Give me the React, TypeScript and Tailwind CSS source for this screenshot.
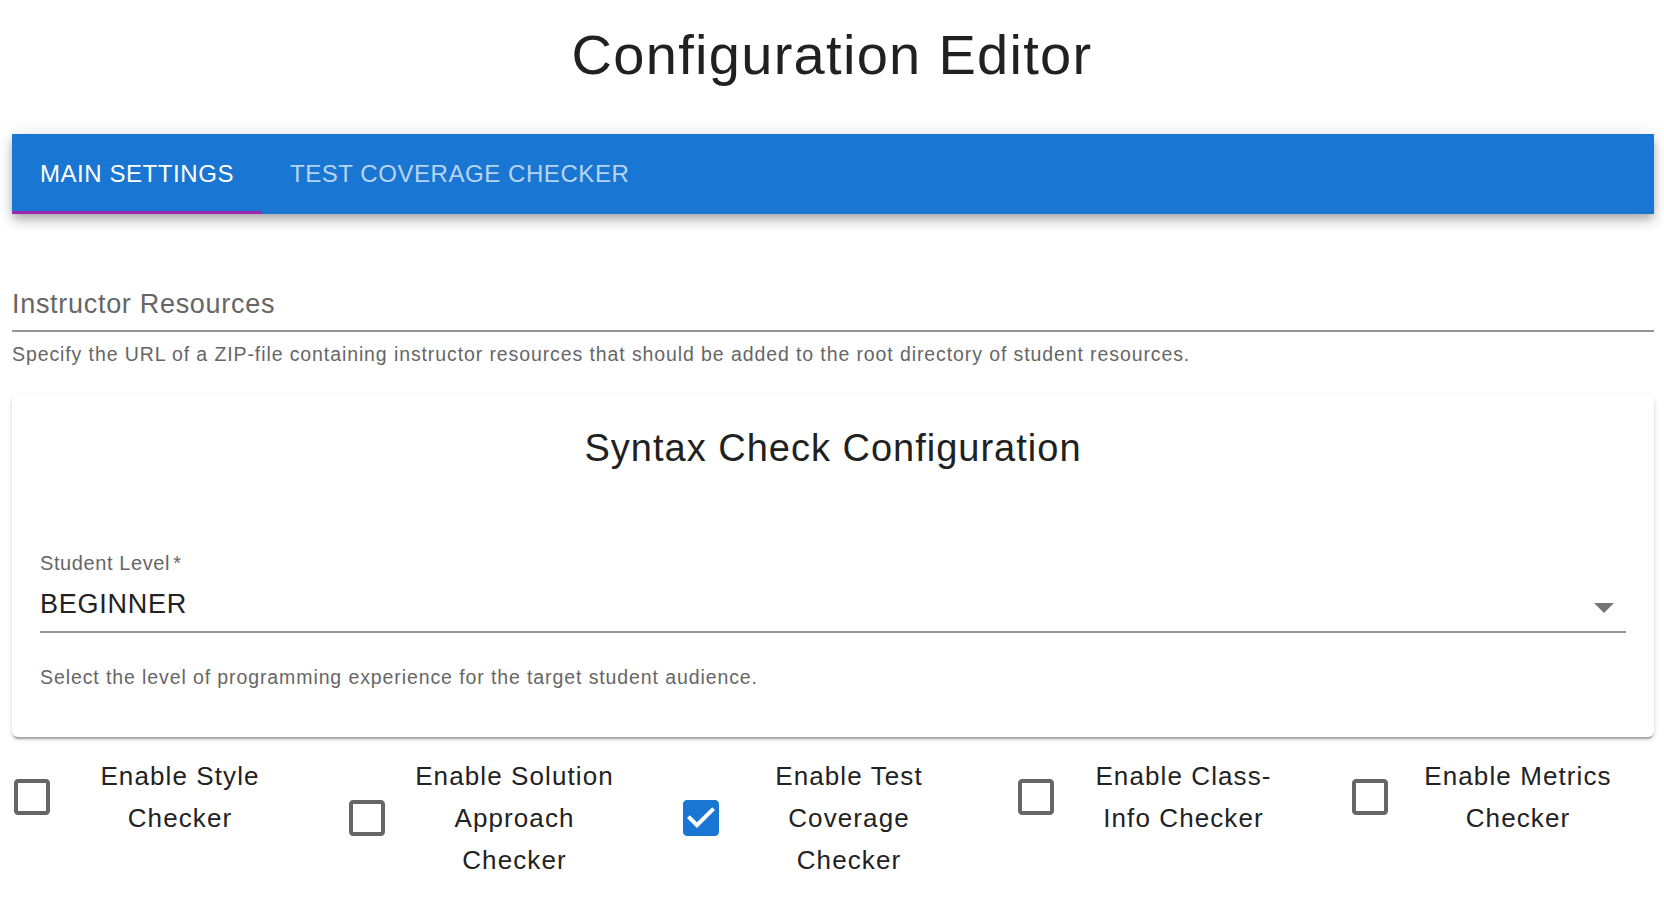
import React from "react";

const checkers = [
  { label: "Enable Style Checker", checked: false },
  { label: "Enable Solution Approach Checker", checked: false },
  { label: "Enable Test Coverage Checker", checked: true },
  { label: "Enable Class-Info Checker", checked: false },
  { label: "Enable Metrics Checker", checked: false },
];

function CheckIcon({ checked }: { checked: boolean }) {
  if (checked) {
    return (
      <svg viewBox="0 0 24 24" className="w-[48px] h-[48px] shrink-0 fill-[#1976d2]">
        <path d="M19 3H5c-1.11 0-2 .9-2 2v14c0 1.1.89 2 2 2h14c1.11 0 2-.9 2-2V5c0-1.1-.89-2-2-2zm-9 14l-5-5 1.41-1.41L10 14.17l7.59-7.59L19 8l-9 9z" />
      </svg>
    );
  }
  return (
    <svg viewBox="0 0 24 24" className="w-[48px] h-[48px] shrink-0 fill-[#666666]">
      <path d="M19 5v14H5V5h14m0-2H5c-1.1 0-2 .9-2 2v14c0 1.1.9 2 2 2h14c1.1 0 2-.9 2-2V5c0-1.1-.9-2-2-2z" />
    </svg>
  );
}

export default function App() {
  return (
    <div className="min-h-screen bg-white overflow-x-hidden font-['Liberation_Sans',Arial,sans-serif] text-[#212121]">
      <h1 className="pt-[27px] text-center text-[56px] leading-none tracking-[1.3px] font-normal">
        Configuration Editor
      </h1>

      <div className="pl-[12px] pr-[10px] mt-[51px]">
        {/* tabs */}
        <div className="h-[80px] bg-[#1976d2] flex shadow-[0_4px_8px_-2px_rgba(0,0,0,0.2),0_8px_10px_0_rgba(0,0,0,0.14),0_2px_20px_0_rgba(0,0,0,0.12)]">
          <div className="relative px-[28px] flex items-center text-[24px] tracking-[0.56px] text-white">
            MAIN SETTINGS
            <div className="absolute left-0 right-0 bottom-0 h-[3px] bg-[#9c27b0]" />
          </div>
          <div className="px-[28px] flex items-center text-[24px] tracking-[0.56px] text-white/70">
            TEST COVERAGE CHECKER
          </div>
        </div>

        {/* instructor resources */}
        <div className="mt-[74px] text-[27px] leading-[32px] tracking-[0.7px] text-[#666666]">
          Instructor Resources
        </div>
        <div className="mt-[10px] h-[2px] bg-[#949494]" />
        <p className="mt-[11px] text-[19.5px] leading-[23px] tracking-[0.9px] text-[#666666]">
          Specify the URL of a ZIP-file containing instructor resources that should be added to the root directory of student resources.
        </p>

        {/* syntax check card */}
        <div className="mt-[29px] rounded-[6px] bg-white px-[28px] pt-[34px] pb-[48px] shadow-[0_4px_2px_-2px_rgba(0,0,0,0.2),0_2px_2px_0_rgba(0,0,0,0.14),0_2px_6px_0_rgba(0,0,0,0.12)]">
          <h2 className="text-center text-[38px] leading-none tracking-[1px] font-normal">
            Syntax Check Configuration
          </h2>
          <div className="mt-[84px] text-[20px] leading-[24px] tracking-[0.6px] text-[#666666]">
            Student Level<span className="ml-[3px]">*</span>
          </div>
          <div className="mt-[13px] flex items-center justify-between">
            <span className="text-[27px] leading-[32px] tracking-[0.75px] text-[#222222]">BEGINNER</span>
            <svg viewBox="0 0 20 10" className="w-[20px] h-[10px] mr-[12px] mt-[7px] fill-[#757575]">
              <path d="M0 0l10 10 10-10z" />
            </svg>
          </div>
          <div className="mt-[11px] h-[2px] bg-[#949494]" />
          <p className="mt-[33px] text-[19.5px] leading-[23px] tracking-[0.9px] text-[#666666]">
            Select the level of programming experience for the target student audience.
          </p>
        </div>

        {/* checkers */}
        <div className="-ml-[8px] mt-[18px] flex items-start">
          {checkers.map((c) => (
            <div key={c.label} className="w-[334.5px] shrink-0 pl-[4px] flex items-center">
              <CheckIcon checked={c.checked} />
              <div className="ml-[19px] w-[210px] text-center text-[26px] leading-[42px] tracking-[1.1px] text-[#222222]">
                {c.label}
              </div>
            </div>
          ))}
        </div>
      </div>
    </div>
  );
}
